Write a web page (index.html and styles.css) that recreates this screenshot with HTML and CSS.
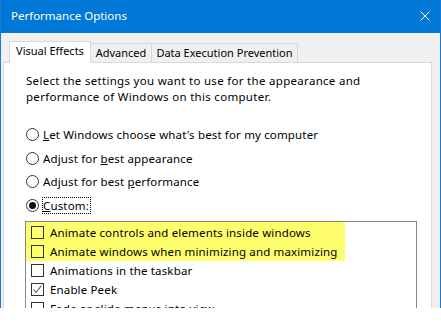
FILE: index.html
```html
<!DOCTYPE html>
<html>
<head>
<meta charset="utf-8">
<link rel="stylesheet" href="styles.css">
</head>
<body>
<div class="window">
  <div class="titlebar">
    <span class="title">Performance Options</span>
    <svg class="close" width="10" height="10" viewBox="0 0 10 10"><path d="M0.5 0.5 L9.5 9.5 M9.5 0.5 L0.5 9.5" stroke="#fff" stroke-width="1" fill="none"/></svg>
  </div>
  <div class="body">
    <div class="tabs">
      <div class="tab active">Visual Effects</div>
      <div class="tab tab-adv">Advanced</div>
      <div class="tab tab-dep">Data Execution Prevention</div>
    </div>
    <div class="panel">
      <p class="intro">Select the settings you want to use for the appearance and<br>performance of Windows on this computer.</p>
      <div class="radios">
        <div class="radio"><span class="circle"></span><span class="label"><u>L</u>et Windows choose what's best for my computer</span></div>
        <div class="radio"><span class="circle"></span><span class="label">Adjust for <u>b</u>est appearance</span></div>
        <div class="radio"><span class="circle"></span><span class="label">Adjust for best <u>p</u>erformance</span></div>
        <div class="radio"><span class="circle checked"></span><span class="label focus"><u>C</u>ustom:</span></div>
      </div>
      <div class="list">
        <div class="highlight">
          <div class="item"><span class="cb"></span><span>Animate controls and elements inside windows</span></div>
          <div class="item"><span class="cb"></span><span>Animate windows when minimizing and maximizing</span></div>
        </div>
        <div class="item"><span class="cb"></span><span>Animations in the taskbar</span></div>
        <div class="item"><span class="cb"><svg width="11" height="11" viewBox="0 0 11 11"><path d="M1.5 5.5 L4 8.5 L9.5 1.5" stroke="#555" stroke-width="1.1" fill="none"/></svg></span><span>Enable Peek</span></div>
        <div class="item"><span class="cb"></span><span>Fade or slide menus into view</span></div>
      </div>
    </div>
  </div>
</div>
</body>
</html>
```

FILE: styles.css
```css
html, body {
  margin: 0;
  padding: 0;
  background: #ffffff;
}
body {
  font-family: "Noto Sans", "Open Sans", sans-serif;
  font-size: 11.5px;
  letter-spacing: 0.15px;
  color: #000;
}
.window {
  width: 441px;
  height: 308px;
  overflow: hidden;
  box-sizing: border-box;
  border-left: 1px solid #1979d6;
  border-right: 1px solid #1979d6;
  background: #f0f0f0;
  box-shadow: 0 1px 2px rgba(0,0,0,0.12);
  display: flex;
  flex-direction: column;
}
.titlebar {
  height: 33px;
  flex: none;
  background: #0078d7;
  display: flex;
  align-items: center;
  justify-content: space-between;
  color: #fff;
  margin: 0 -1px;
  padding: 0 11px;
}
.title {
  font-size: 11.5px;
  letter-spacing: 0;
  line-height: 16px;
  margin-top: -1px;
}
.close {
  display: block;
  margin-top: -1px;
}
.body {
  flex: 1;
  padding: 0 8px 0 2px;
  display: flex;
  flex-direction: column;
}
.tabs {
  margin-top: 8px;
  padding-left: 6px;
  display: flex;
  align-items: flex-end;
  height: 21px;
  flex: none;
  font-size: 11px;
  letter-spacing: 0;
}
.tab {
  box-sizing: border-box;
  height: 19px;
  border: 1px solid #d9d9d9;
  border-bottom: none;
  background: #f0f0f0;
  text-align: center;
  line-height: 18px;
  white-space: nowrap;
}
.tab.active {
  position: relative;
  z-index: 2;
  width: 82px;
  height: 22px;
  margin-bottom: -1px;
  background: #fff;
  line-height: 18px;
}
.tab-adv {
  width: 62px;
  margin-left: -1px;
}
.tab-dep {
  width: 147px;
  margin-left: -1px;
}
.panel {
  flex: 1;
  background: #fff;
  border: 1px solid #d9d9d9;
  padding: 0 14px 0 21px;
}
.intro {
  margin: 10px 0 0 1px;
  line-height: 16px;
  letter-spacing: 0.3px;
  white-space: nowrap;
}
.radios {
  margin: 18px 0 0 1px;
  display: flex;
  flex-direction: column;
}
.radio {
  height: 23.5px;
  display: flex;
  align-items: center;
  white-space: nowrap;
}
.circle {
  width: 13px;
  height: 13px;
  box-sizing: border-box;
  border: 1px solid #333;
  border-radius: 50%;
  background: #fff;
  margin-right: 3px;
  display: flex;
  align-items: center;
  justify-content: center;
  flex: none;
}
.circle.checked::after {
  content: "";
  width: 7px;
  height: 7px;
  border-radius: 50%;
  background: #111;
}
.label {
  line-height: 15px;
  border: 1px solid transparent;
  padding: 0 1px 0 0;
}
.label.focus {
  border: 1px dotted #000;
}
.list {
  margin-top: 4px;
  width: 392px;
  height: 120px;
  box-sizing: border-box;
  border: 1px solid #828790;
  background: #fff;
}
.highlight {
  width: 319px;
  background: #ffff6e;
  padding-top: 1px;
}
.item {
  height: 19px;
  display: flex;
  align-items: center;
  padding-left: 5px;
  white-space: nowrap;
}
.cb {
  width: 13px;
  height: 13px;
  box-sizing: border-box;
  border: 1px solid #333;
  margin-right: 6px;
  flex: none;
  display: flex;
  align-items: center;
  justify-content: center;
}
.cb svg {
  display: block;
}
```
